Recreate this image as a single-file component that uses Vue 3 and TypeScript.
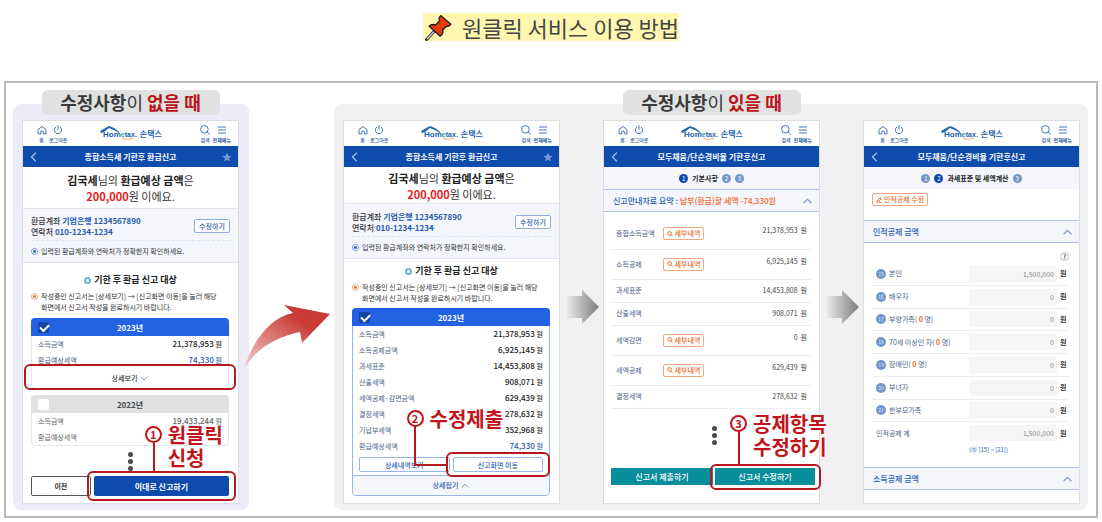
<script setup lang="ts">
interface Row {
  label: string
  value: string
  detail?: boolean
  highlight?: boolean
}

interface Phone {
  id: string
  kind: 'submit' | 'review' | 'summary' | 'deduction'
  title: string
}

interface Panel {
  id: string
  emphasis: string
  phones: Phone[]
}

interface Deduction {
  no: string
  label: string
  count: boolean
  value: string
}

const refundTitle = '종합소득세 기한후 환급신고'
const simpleTitle = '모두채움/단순경비율 기한후신고'

const panels: Panel[] = [
  { id: 'plain', emphasis: '없을 때', phones: [{ id: 'p1', kind: 'submit', title: refundTitle }] },
  {
    id: 'edit',
    emphasis: '있을 때',
    phones: [
      { id: 'p2', kind: 'review', title: refundTitle },
      { id: 'p3', kind: 'summary', title: simpleTitle },
      { id: 'p4', kind: 'deduction', title: simpleTitle },
    ],
  },
]

const shortRows: Row[] = [
  { label: '소득금액', value: '21,378,953' },
  { label: '환급예상세액', value: '74,330', highlight: true },
]

const previousRows: Row[] = [
  { label: '소득금액', value: '19,433,244' },
  { label: '환급예상세액', value: '' },
]

const fullRows: Row[] = [
  { label: '소득금액', value: '21,378,953' },
  { label: '소득공제금액', value: '6,925,145' },
  { label: '과세표준', value: '14,453,808' },
  { label: '산출세액', value: '908,071' },
  { label: '세액공제·감면금액', value: '629,439' },
  { label: '결정세액', value: '278,632' },
  { label: '기납부세액', value: '352,968' },
  { label: '환급예상세액', value: '74,330', highlight: true },
]

const summaryRows: Row[] = [
  { label: '종합소득금액', value: '21,378,953', detail: true },
  { label: '소득공제', value: '6,925,145', detail: true },
  { label: '과세표준', value: '14,453,808' },
  { label: '산출세액', value: '908,071' },
  { label: '세액감면', value: '0', detail: true },
  { label: '세액공제', value: '629,439', detail: true },
  { label: '결정세액', value: '278,632' },
]

const deductions: Deduction[] = [
  { no: '15', label: '본인', count: false, value: '1,500,000' },
  { no: '16', label: '배우자', count: false, value: '0' },
  { no: '17', label: '부양가족', count: true, value: '0' },
  { no: '18', label: '70세 이상인 자', count: true, value: '0' },
  { no: '19', label: '장애인', count: true, value: '0' },
  { no: '20', label: '부녀자', count: false, value: '0' },
  { no: '21', label: '한부모가족', count: false, value: '0' },
  { no: '', label: '인적공제 계', count: false, value: '1,500,000' },
]
</script>

<template>
  <main class="page">
    <h1 class="title">
      <span class="title-mark">
        <svg class="pin" viewBox="79 39 84 82" aria-hidden="true">
          <path d="M108 92 84 117" stroke="#1b1b1b" stroke-width="9" stroke-linecap="round" />
          <path d="M109 91 86 115" stroke="#d9dde2" stroke-width="4" stroke-linecap="round" />
          <path
            d="M129 43 159 70Q156 78 146 76L134 88Q137 99 126 107L92 76Q99 68 112 72L124 60Q120 49 129 43Z"
            fill="#e8380d" stroke="#1b1b1b" stroke-width="4" stroke-linejoin="round"
          />
        </svg>
        <span>원클릭 서비스 이용 방법</span>
      </span>
    </h1>

    <div class="board">
      <template v-for="(panel, pi) in panels" :key="panel.id">
        <svg v-if="pi > 0" class="swoosh" viewBox="0 0 87 66" aria-hidden="true">
          <defs>
            <linearGradient id="swoosh-fill" x1="0" y1="1" x2="0.72" y2="0.3">
              <stop offset="0" stop-color="#f3d5d3" />
              <stop offset="0.5" stop-color="#dd8480" />
              <stop offset="1" stop-color="#c93b37" />
            </linearGradient>
          </defs>
          <path d="M0 65C8 38 26 13 49 9L40 1 86 10 58 39 56 28C33 33 13 43 0 65Z" fill="url(#swoosh-fill)" />
        </svg>

        <section class="panel" :class="panel.id">
          <h2 class="chip">수정사항<span class="thin">이</span> <em>{{ panel.emphasis }}</em></h2>
          <div class="phones">
            <template v-for="(phone, i) in panel.phones" :key="phone.id">
              <svg v-if="i > 0" class="next" viewBox="0 0 32 34" aria-hidden="true">
                <defs>
                  <linearGradient :id="'next-' + phone.id">
                    <stop offset="0" stop-color="#e9e9ea" />
                    <stop offset="1" stop-color="#7c7c7c" />
                  </linearGradient>
                </defs>
                <path d="M0 6H15V0L32 17 15 34V28H0Z" :fill="`url(#next-${phone.id})`" />
              </svg>

              <article class="phone" :class="phone.kind">
                <header class="top">
                  <nav class="tools">
                    <a href="#">
                      <svg viewBox="0 0 10 9" aria-hidden="true"><path d="M1 4 5 1 9 4V8.4H6.3V6Q5 4.8 3.7 6V8.4H1Z" /></svg>
                      홈
                    </a>
                    <a href="#">
                      <svg viewBox="0 0 10 9" aria-hidden="true"><path d="M3 1.5A3.6 3.6 0 1 0 7 1.5M5 0V4" /></svg>
                      로그아웃
                    </a>
                  </nav>
                  <a class="logo" href="#">
                    <svg class="roof" viewBox="0 0 36 14" aria-hidden="true">
                      <path d="M0 5 9 0 14 2Q18 4 20 8L16 5 9 2 4 6 1 7Z" fill="#2065b5" />
                      <path d="M22 12Q27 15 33 12" fill="none" stroke="#f4a56b" />
                    </svg>
                    <span class="brand">Hom<i>e</i><small>tax.</small></span>
                    <b>손택스</b>
                  </a>
                  <nav class="tools">
                    <a href="#">
                      <svg viewBox="0 0 10 9" aria-hidden="true"><circle cx="4.4" cy="3.8" r="3.8" /><path d="M7.2 6.4 9.8 9" /></svg>
                      검색
                    </a>
                    <a class="strong" href="#">
                      <svg viewBox="0 0 10 9" aria-hidden="true"><path d="M1 1.5H9M1 4.5H9M1 7.5H9" /></svg>
                      전체메뉴
                    </a>
                  </nav>
                </header>

                <div class="bar">
                  <button type="button" aria-label="이전 화면">
                    <svg viewBox="0 0 8 8" aria-hidden="true"><path d="M5.5 .5 2 4 5.5 7.5" fill="none" stroke="#a9c4f0" /></svg>
                  </button>
                  <h3>{{ phone.title }}</h3>
                  <button v-if="phone.title === refundTitle" type="button" aria-label="즐겨찾기">
                    <svg viewBox="0 0 10 10" aria-hidden="true">
                      <path d="M5 .5 6.3 3.7 9.7 4 7.1 6.2 7.9 9.5 5 7.7 2.1 9.5 2.9 6.2 .3 4 3.7 3.7Z" fill="#6f97da" />
                    </svg>
                  </button>
                  <span v-else class="blank"></span>
                </div>

                <template v-if="phone.kind === 'submit' || phone.kind === 'review'">
                  <p class="greeting">
                    <b>김국세</b>님의 <b>환급예상 금액</b>은<br />
                    <b class="amount">200,000</b>원 이에요.
                  </p>
                  <div class="account">
                    <div class="account-info">
                      <p>환급계좌 <b>기업은행 1234567890</b><br />연락처 <b>010-1234-1234</b></p>
                      <button type="button">수정하기</button>
                    </div>
                    <p class="hint"><i class="ring"></i>입력된 환급계좌와 연락처가 정확한지 확인하세요.</p>
                  </div>
                  <h4 class="target"><i class="ring"></i>기한 후 환급 신고 대상</h4>
                  <p class="notice">
                    <i class="ring"></i>
                    <span>작성중인 신고서는 [상세보기] → [신고화면 이동]을 눌러 해당<br />화면에서 신고서 작성을 완료하시기 바랍니다.</span>
                  </p>

                  <div class="card" :class="{ open: phone.kind === 'review' }">
                    <label class="year"><input type="checkbox" checked /><span>2023년</span></label>
                    <table>
                      <tbody>
                        <tr v-for="row in phone.kind === 'review' ? fullRows : shortRows" :key="row.label" :class="{ blue: row.highlight }">
                          <th scope="row">{{ row.label }}</th>
                          <td>{{ row.value }} <span>원</span></td>
                        </tr>
                      </tbody>
                    </table>
                    <div v-if="phone.kind === 'review'" class="pair">
                      <button type="button">상세내역보기</button>
                      <div class="marked">
                        <button type="button">신고화면 이동</button>
                        <span class="frame"></span>
                        <span class="elbow"></span>
                        <strong class="callout two"><i>2</i><span>수정제출</span></strong>
                      </div>
                    </div>
                    <div class="marked fold">
                      <button type="button">
                        {{ phone.kind === 'review' ? '상세접기' : '상세보기' }}
                        <svg viewBox="0 0 8 5" aria-hidden="true" :class="{ down: phone.kind === 'submit' }"><path d="M.5 4.5 4 1 7.5 4.5" /></svg>
                      </button>
                      <span v-if="phone.kind === 'submit'" class="frame"></span>
                    </div>
                  </div>

                  <template v-if="phone.kind === 'submit'">
                    <div class="card past">
                      <label class="year"><input type="checkbox" /><span>2022년</span></label>
                      <table>
                        <tbody>
                          <tr v-for="row in previousRows" :key="row.label">
                            <th scope="row">{{ row.label }}</th>
                            <td><template v-if="row.value">{{ row.value }} <span>원</span></template></td>
                          </tr>
                        </tbody>
                      </table>
                    </div>
                    <div class="dots"><i></i><i></i><i></i></div>
                    <div class="actions">
                      <button type="button" class="back">이전</button>
                      <div class="marked">
                        <button type="button" class="primary">이대로 신고하기</button>
                        <span class="frame"></span>
                        <span class="stem"></span>
                        <strong class="callout one"><i>1</i><span>원클릭<br />신청</span></strong>
                      </div>
                    </div>
                  </template>
                </template>

                <template v-else-if="phone.kind === 'summary'">
                  <div class="steps"><i class="on">1</i><b>기본사항</b><i>2</i><i>3</i></div>
                  <button type="button" class="section">
                    <span>신고안내자료 요약 : <em>납부(환급)할 세액 -74,330원</em></span>
                    <svg viewBox="0 0 8 5" aria-hidden="true"><path d="M.5 4.5 4 1 7.5 4.5" /></svg>
                  </button>
                  <table class="summary-table">
                    <tbody>
                      <tr v-for="row in summaryRows" :key="row.label" :class="{ tall: row.detail }">
                        <th scope="row">{{ row.label }}</th>
                        <td class="detail">
                          <button v-if="row.detail" type="button" class="orange">
                            <svg viewBox="0 0 6 6" aria-hidden="true"><circle cx="2.6" cy="2.4" r="1.8" /><path d="M4 4 5.5 5.5" /></svg>
                            세부내역
                          </button>
                        </td>
                        <td class="money">{{ row.value }}<span>원</span></td>
                      </tr>
                    </tbody>
                  </table>
                  <div class="dots"><i></i><i></i><i></i></div>
                  <div class="teal">
                    <button type="button">신고서 제출하기</button>
                    <div class="marked">
                      <button type="button">신고서 수정하기</button>
                      <span class="frame"></span>
                      <span class="stem"></span>
                      <strong class="callout three"><i>3</i><span>공제항목<br />수정하기</span></strong>
                    </div>
                  </div>
                </template>

                <template v-else>
                  <div class="steps"><i>1</i><i class="on">2</i><b>과세표준 및 세액계산</b><i>3</i></div>
                  <button type="button" class="orange edit">
                    <svg viewBox="0 0 6 6" aria-hidden="true"><path d="M1 4.2 4 .8 5.2 1.8 2.2 5 .8 5.2ZM3 5.5H5.5" /></svg>
                    인적공제 수정
                  </button>
                  <button type="button" class="section">
                    <span>인적공제 금액</span>
                    <svg viewBox="0 0 8 5" aria-hidden="true"><path d="M.5 4.5 4 1 7.5 4.5" /></svg>
                  </button>
                  <button type="button" class="help">?</button>
                  <div class="fields">
                    <div v-for="(d, n) in deductions" :key="d.label" class="field">
                      <label :for="'deduction-' + n">
                        <i v-if="d.no">{{ d.no }}</i>
                        <span>{{ d.label }}<template v-if="d.count">( <em>0</em> 명)</template></span>
                      </label>
                      <input :id="'deduction-' + n" type="text" :value="d.value" readonly />
                      <b>원</b>
                    </div>
                  </div>
                  <p class="formula">(⑮ [15] ~ [21])</p>
                  <button type="button" class="section">
                    <span>소득공제 금액</span>
                    <svg viewBox="0 0 8 5" aria-hidden="true"><path d="M.5 4.5 4 1 7.5 4.5" /></svg>
                  </button>
                </template>
              </article>
            </template>
          </div>
        </section>
      </template>
    </div>
  </main>
</template>

<style>
body {
  margin: 0;
  background: #fff;
}
</style>

<style scoped>
* {
  box-sizing: border-box;
}

.page {
  padding: 13px 4px 4px;
  color: #333;
  font: 7px/11px "Noto Sans CJK KR", "Noto Sans", sans-serif;
}

h1, h2, h3, h4, p {
  margin: 0;
}

i, em {
  font-style: normal;
}

button {
  margin: 0;
  padding: 0;
  border: 0;
  border-radius: 0;
  background: none;
  color: inherit;
  font: inherit;
  white-space: nowrap;
  cursor: pointer;
}

a {
  color: inherit;
  text-decoration: none;
}

table {
  width: 100%;
  border-collapse: collapse;
}

th, td {
  padding: 0;
}

.title {
  display: flex;
  justify-content: center;
  margin-bottom: 40px;
  color: #444;
  font-size: 22px;
  font-weight: 400;
  line-height: 28px;
}

.title-mark {
  display: flex;
  align-items: center;
  gap: 10px;
  padding-left: 2px;
  background: #fff6b0;
}

.pin {
  width: 27px;
  height: 27px;
  fill: none;
}

.board {
  display: grid;
  grid-template-columns: minmax(0, 236fr) 85px minmax(0, 754fr);
  padding: 21px 8px 6px 7px;
  border: 2px solid #b9b9b9;
}

.swoosh {
  width: 87px;
  height: 66px;
  margin: 200px 0 0 -5px;
}

.panel {
  padding: 0 8px 6px 9px;
  border-radius: 8px;
  background: #f1f1f3;
}

.panel.plain {
  padding-right: 10px;
  background: #ecebf8;
}

.chip {
  width: 178px;
  margin: -14px auto 5px;
  border-radius: 6px;
  background: #e0e2e2;
  color: #3a3a3a;
  font-size: 18px;
  font-weight: 700;
  line-height: 25px;
  text-align: center;
}

.chip .thin {
  font-weight: 400;
}

.chip em {
  color: #bd1219;
}

.phones {
  display: grid;
  grid-template-columns: minmax(0, 1fr);
}

.edit .phones {
  grid-template-columns: minmax(0, 1fr) 43px minmax(0, 1fr) 43px minmax(0, 1fr);
}

.next {
  width: 32px;
  height: 34px;
  margin: 170px auto 0 7px;
}

.phone {
  min-height: 384px;
  border: 1px solid #dcdedd;
  background: #fff;
}

.top {
  display: flex;
  align-items: center;
  justify-content: space-between;
  height: 25px;
  padding: 0 7px 0 11px;
}

.tools {
  display: flex;
  color: #2c5b9c;
  font-size: 5px;
  font-weight: 500;
  line-height: 7px;
}

.tools a {
  display: flex;
  flex-direction: column;
  align-items: center;
  gap: 1px;
  min-width: 15px;
  white-space: nowrap;
}

.tools svg {
  width: 10px;
  height: 10px;
  overflow: visible;
  fill: none;
  stroke: #4574b8;
}

.tools .strong {
  font-weight: 700;
}

.logo {
  position: relative;
  display: flex;
  align-items: center;
  gap: 3px;
  color: #1d5fae;
  font-size: 8px;
}

.roof {
  position: absolute;
  top: -2px;
  left: -3px;
  width: 36px;
  height: 14px;
}

.brand {
  padding-top: 2px;
  font: 700 8px/10px "Liberation Sans", Arial, sans-serif;
}

.brand i {
  color: #1aa7a0;
  font-size: 7px;
}

.brand small {
  font-size: 7px;
}

.bar {
  display: flex;
  align-items: center;
  justify-content: space-between;
  height: 21px;
  padding: 0 6px;
  background: #0f4bad;
  color: #fff;
}

.bar h3 {
  font-size: 8px;
  font-weight: 700;
}

.bar button, .blank {
  width: 10px;
  height: 10px;
}

.bar svg {
  display: block;
  width: 10px;
  height: 10px;
}

.greeting {
  padding: 5px 0 4px;
  border-bottom: 1px solid #e3e5ea;
  color: #333;
  font-size: 11px;
  line-height: 16px;
  text-align: center;
}

.greeting b {
  color: #222;
}

.greeting .amount {
  color: #ee2020;
}

.review .greeting {
  padding: 3px 0 1px;
}

.account {
  padding: 6px 8px 0;
  border-bottom: 1px solid #e1e4ee;
  background: #f4f6fc;
}

.review .account {
  padding-top: 7px;
}

.account-info {
  display: flex;
  align-items: center;
  justify-content: space-between;
  padding-bottom: 3px;
  border-bottom: 1px dashed #e0e4ee;
  font-size: 8px;
  font-weight: 500;
}

.account-info b {
  color: #1f5bb0;
}

.account-info button {
  width: 36px;
  height: 14px;
  border: 1px solid #8cadde;
  border-radius: 2px;
  background: #fff;
  color: #2b61b4;
  font-size: 7px;
  font-weight: 500;
  line-height: 11px;
}

.hint {
  display: flex;
  align-items: center;
  gap: 3px;
  height: 21px;
}

.ring {
  display: block;
  flex: none;
  width: 7px;
  height: 7px;
  border: 1px solid #6b98e0;
  border-radius: 50%;
  background: radial-gradient(#3d74cc 1px, #fff 2px);
}

.target {
  display: flex;
  align-items: center;
  justify-content: center;
  gap: 3px;
  margin: 11px 0 5px;
  color: #222;
  font-size: 9px;
  line-height: 12px;
}

.review .target {
  margin-top: 6px;
}

.target .ring {
  border: 2px solid #63bcc4;
  background: #fff;
}

.notice {
  display: flex;
  gap: 3px;
  margin: 0 8px 5px;
  white-space: nowrap;
}

.review .notice {
  margin-bottom: 4px;
}

.notice .ring {
  margin-top: 2px;
  border-color: #f3a878;
  background: radial-gradient(#ee7a33 1px, #fff 2px);
}

.card {
  margin: 0 9px 6px 8px;
  border: 1px solid #e2e6ee;
  border-radius: 4px;
}

.card.open {
  border-color: #96b5ec;
}

.card .year {
  display: flex;
  align-items: center;
  height: 18px;
  margin: -1px -1px 0;
  padding: 0 18px 0 7px;
  border-radius: 4px 4px 0 0;
  background: #2262e3;
  color: #fff;
  font-size: 8px;
  font-weight: 700;
}

.year span {
  flex: 1;
  text-align: center;
}

.year input {
  position: relative;
  width: 11px;
  height: 11px;
  margin: 0;
  border-radius: 2px;
  background: #fff;
  appearance: none;
}

.year input:checked {
  background: #1545a2;
}

.year input:checked::after {
  position: absolute;
  top: 2px;
  left: 2px;
  width: 7px;
  height: 4px;
  border: solid #fff;
  border-width: 0 0 2px 2px;
  content: "";
  transform: rotate(-45deg);
}

.card th {
  height: 16px;
  padding-left: 6px;
  color: #4a6288;
  font-weight: 400;
  text-align: left;
}

.card td {
  padding-right: 6px;
  color: #222;
  font-size: 8px;
  font-weight: 500;
  text-align: right;
}

.card td span {
  font-size: 7px;
}

.card .blue td {
  color: #1f5bb0;
}

.past .year {
  background: #e0e2e2;
  color: #444;
}

.past th, .past td {
  color: #666;
}

.marked {
  position: relative;
}

.fold button {
  display: flex;
  align-items: center;
  justify-content: center;
  gap: 3px;
  width: 100%;
  height: 20px;
  color: #333;
  font-weight: 500;
}

.open .fold button {
  border-top: 1px solid #96b5ec;
  border-radius: 0 0 4px 4px;
  background: #f4f6fc;
  color: #2b61b4;
}

.fold svg {
  width: 8px;
  height: 5px;
  fill: none;
  stroke: #8aa5cd;
}

.fold .down {
  transform: rotate(180deg);
}

.frame {
  position: absolute;
  inset: -5px -7px;
  z-index: 1;
  border: 2px solid #b5191f;
  border-radius: 6px;
  pointer-events: none;
}

.fold .frame {
  inset: -4px -8px -2px;
}

.pair {
  display: grid;
  grid-template-columns: 1fr 1fr;
  gap: 3px;
  margin: 3px 6px;
}

.pair button {
  width: 100%;
  height: 15px;
  border: 1px solid #96b5ec;
  border-radius: 2px;
  background: #fff;
  color: #2b61b4;
  font-weight: 500;
  line-height: 12px;
}

.dots {
  display: flex;
  flex-direction: column;
  align-items: center;
  gap: 2px;
  margin: 5px 0;
}

.dots i {
  width: 5px;
  height: 5px;
  border-radius: 50%;
  background: #4a4a4a;
}

.actions {
  display: grid;
  grid-template-columns: 60fr 136fr;
  gap: 3px;
  margin: 0 9px 0 8px;
}

.actions button {
  width: 100%;
  height: 20px;
  border-radius: 2px;
  font-weight: 700;
}

.actions .back {
  border: 1px solid #555;
}

.actions .primary {
  background: #0f4bad;
  color: #fff;
  font-size: 8px;
}

.callout {
  position: absolute;
  z-index: 2;
  display: flex;
  gap: 6px;
  color: #c1151b;
  font-size: 20px;
  line-height: 23px;
  white-space: nowrap;
  text-shadow: 0 0 2px #fff, 0 0 2px #fff, 1px 1px 1px #fff, -1px -1px 1px #fff;
}

.callout i {
  width: 17px;
  height: 17px;
  margin-top: 3px;
  border: 2px solid #c1151b;
  border-radius: 50%;
  background: #fff;
  font-size: 11px;
  line-height: 13px;
  text-align: center;
}

.callout.one {
  bottom: 27px;
  left: 51px;
}

.callout.two {
  bottom: 42px;
  left: -46px;
}

.callout.three {
  bottom: 27px;
  left: 17px;
}

.stem, .elbow {
  position: absolute;
  z-index: 1;
  background: #b5191f;
}

.stem {
  bottom: 24px;
  left: 59px;
  width: 2px;
  height: 29px;
}

.teal .stem {
  bottom: 21px;
  left: 25px;
  height: 34px;
}

.elbow {
  bottom: 6px;
  left: -39px;
  width: 33px;
  height: 40px;
  border: solid #b5191f;
  border-width: 0 0 2px 2px;
  background: none;
}

.steps {
  display: flex;
  align-items: center;
  justify-content: center;
  gap: 4px;
  height: 22px;
  background: #f4f6fc;
  color: #222;
}

.steps i {
  width: 9px;
  height: 9px;
  border-radius: 50%;
  background: #7396c8;
  color: #fff;
  font-size: 6px;
  line-height: 9px;
  text-align: center;
}

.steps .on {
  background: #0f4bad;
}

.steps b {
  font-weight: 700;
}

.section {
  display: flex;
  align-items: center;
  justify-content: space-between;
  width: 100%;
  height: 23px;
  padding: 0 7px 0 9px;
  border: solid #a9c3e8;
  border-width: 1px 0;
  background: #f4f6fc;
  color: #2b61b4;
  font-size: 8px;
  font-weight: 500;
}

.section em {
  color: #f0682a;
}

.section svg {
  width: 9px;
  height: 6px;
  fill: none;
  stroke: #7d9cc9;
}

.summary-table {
  width: auto;
  min-width: calc(100% - 15px);
  margin: 7px 8px 0 7px;
}

.summary-table tr {
  height: 23px;
  border-bottom: 1px solid #ececef;
}

.summary-table .tall {
  height: 30px;
}

.summary-table th {
  width: 52px;
  padding-left: 5px;
  color: #4a6288;
  font-weight: 400;
  text-align: left;
  white-space: nowrap;
}

.summary-table .money {
  padding-right: 4px;
  color: #444;
  text-align: right;
}

.summary-table .tall .money {
  padding-bottom: 6px;
}

.money span {
  margin-left: 3px;
}

.orange {
  display: flex;
  align-items: center;
  justify-content: center;
  gap: 2px;
  width: 41px;
  height: 13px;
  border: 1px solid #f5a67c;
  border-radius: 2px;
  color: #ee6a2c;
  font-weight: 500;
}

.orange svg {
  width: 6px;
  height: 6px;
  fill: none;
  stroke: #ee6a2c;
}

.summary .dots {
  margin: 17px 0 23px 5px;
}

.teal {
  display: grid;
  grid-template-columns: 1fr 1fr;
  margin: 0 4px 0 7px;
}

.teal button {
  width: 100%;
  height: 17px;
  background: #078e9c;
  color: #fff;
  font-size: 8px;
  font-weight: 500;
}

.teal .marked {
  padding-left: 2px;
}

.teal .frame {
  inset: -4px -6px -5px -3px;
}

.orange.edit {
  width: 56px;
  margin: 4px 0 14px 8px;
}

.help {
  display: block;
  width: 9px;
  height: 9px;
  margin: 9px 10px 2px auto;
  border: 1px solid #bbb;
  border-radius: 50%;
  color: #444;
  font-size: 6px;
  font-weight: 700;
  line-height: 7px;
}

.fields {
  display: flex;
  flex-direction: column;
  height: 181px;
  margin: 0 9px 0 8px;
}

.field {
  display: flex;
  flex: 1;
  align-items: center;
  padding-left: 4px;
  border-bottom: 1px solid #ececef;
}

.field:last-child {
  border-bottom: 0;
}

.field label {
  display: flex;
  flex: 1;
  align-items: center;
  gap: 3px;
  color: #4a6288;
  white-space: nowrap;
}

.field i {
  width: 10px;
  height: 10px;
  border-radius: 50%;
  background: #7396c8;
  color: #dfe9f8;
  font-size: 5px;
  line-height: 10px;
  text-align: center;
}

.field em {
  color: #f0682a;
  font-weight: 700;
}

.field input {
  width: 88px;
  height: 16px;
  padding: 0 3px;
  border: 0;
  background: #f5f5f5;
  color: #888;
  font: inherit;
  text-align: right;
}

.field b {
  width: 10px;
  margin-left: 3px;
  color: #333;
}

.formula {
  margin-bottom: 12px;
  padding-left: 34px;
  color: #2b61b4;
  font-size: 6px;
  text-align: center;
}
</style>
